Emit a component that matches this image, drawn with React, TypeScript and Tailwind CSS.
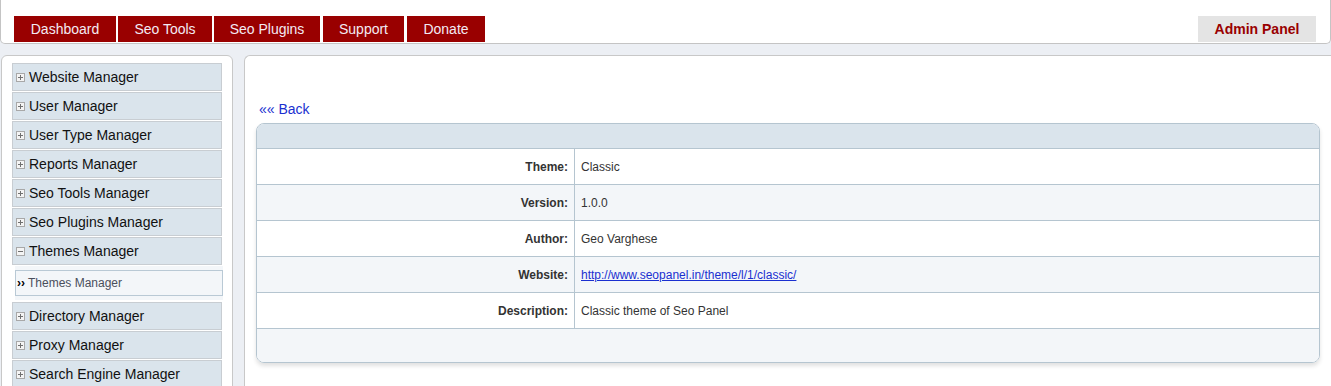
import React from "react";

const tabs = [
  { label: "Dashboard", w: "w-[102px]", ml: "ml-0" },
  { label: "Seo Tools", w: "w-[94px]", ml: "ml-[2px]" },
  { label: "Seo Plugins", w: "w-[106px]", ml: "ml-[2px]" },
  { label: "Support", w: "w-[81px]", ml: "ml-[3px]" },
  { label: "Donate", w: "w-[78px]", ml: "ml-[3px]" },
];

const menuTop = ["Website Manager", "User Manager", "User Type Manager", "Reports Manager", "Seo Tools Manager", "Seo Plugins Manager"];
const menuBottom = ["Directory Manager", "Proxy Manager", "Search Engine Manager"];

const rows = [
  { label: "Theme:", value: "Classic" },
  { label: "Version:", value: "1.0.0" },
  { label: "Author:", value: "Geo Varghese" },
  { label: "Website:", value: "http://www.seopanel.in/theme/l/1/classic/", link: true },
  { label: "Description:", value: "Classic theme of Seo Panel" },
];

function ToggleIcon({ open }: { open?: boolean }) {
  return (
    <svg width="9" height="9" viewBox="0 0 9 9" className="shrink-0">
      <rect x="0.5" y="0.5" width="8" height="8" fill="#f4f4f4" stroke="#a8a8a8" />
      <line x1="2" y1="4.5" x2="7" y2="4.5" stroke="#707070" />
      {!open && <line x1="4.5" y1="2" x2="4.5" y2="7" stroke="#707070" />}
    </svg>
  );
}

function MenuItem({ label, open }: { label: string; open?: boolean }) {
  return (
    <div className="h-[28px] mb-[1px] border border-[#c8cdd2] bg-[#dae4ec] flex items-center pl-[3px] gap-[4px] text-[14px] text-[#111]">
      <ToggleIcon open={open} />
      <span>{label}</span>
    </div>
  );
}

export default function App() {
  return (
    <div className="w-[1331px] h-[386px] overflow-hidden bg-[#eceff4] font-['Liberation_Sans',Arial,sans-serif]">
      {/* header */}
      <div className="h-[44px] bg-white border-x border-b border-[#c4c4c4] rounded-b-[5px] flex items-start justify-between pl-[13px] pr-[14px] pt-[16px]">
        <div className="flex">
          {tabs.map((t) => (
            <div key={t.label} className={`${t.w} ${t.ml} h-[26px] bg-[#990000] text-[#f3eaf3] text-[14px] flex items-center justify-center`}>
              {t.label}
            </div>
          ))}
        </div>
        <div className="w-[118px] h-[26px] bg-[#e4e4e4] text-[#990000] font-bold text-[14px] flex items-center justify-center">
          Admin Panel
        </div>
      </div>

      <div className="flex gap-[11px] mt-[11px] pl-[1px]">
        {/* left menu */}
        <div className="w-[232px] h-[400px] bg-white border border-[#c8c8c8] rounded-t-[6px] px-[10px] pt-[7px]">
          {menuTop.map((m) => (
            <MenuItem key={m} label={m} />
          ))}
          <MenuItem label="Themes Manager" open />
          <div className="ml-[3px] w-[208px] h-[34px] bg-[#f3f6f9] pt-[4px] mb-[2px]">
            <div className="h-[26px] border border-[#b9c9d5] bg-[#f3f6f9] flex items-center pl-[1px] text-[12px] text-[#4a4f5c]">
              <span className="font-bold text-black text-[12px] mr-[3px]">››</span>
              <span>Themes Manager</span>
            </div>
          </div>
          {menuBottom.map((m) => (
            <MenuItem key={m} label={m} />
          ))}
        </div>

        {/* content */}
        <div className="flex-1 h-[400px] bg-white border-l border-t border-[#c8c8c8] rounded-tl-[6px] px-[11px] pt-[45px]">
          <div className="pl-[3px] h-[16px] leading-[16px] text-[14px] text-[#1a2fd0] mb-[6px]">«« Back</div>
          <div className="border border-[#b5c5d0] rounded-[8px] overflow-hidden shadow-[0_3px_4px_rgba(0,0,0,0.12)] text-[12px] text-[#333]">
            <div className="h-[24px] bg-[#dae4ec]" />
            {rows.map((r, i) => (
              <div key={r.label} className={`flex h-[36px] border-t border-[#b5c5d0] ${i % 2 === 1 ? "bg-[#f3f6f9]" : "bg-white"}`}>
                <div className="w-[318px] shrink-0 border-r border-[#b5c5d0] flex items-center justify-end pr-[6px] font-bold">
                  {r.label}
                </div>
                <div className="flex items-center pl-[6px]">
                  {r.link ? <span className="text-[#1a2fd0] underline">{r.value}</span> : r.value}
                </div>
              </div>
            ))}
            <div className="h-[34px] border-t border-[#b5c5d0] bg-[#f3f6f9]" />
          </div>
        </div>
      </div>
    </div>
  );
}
